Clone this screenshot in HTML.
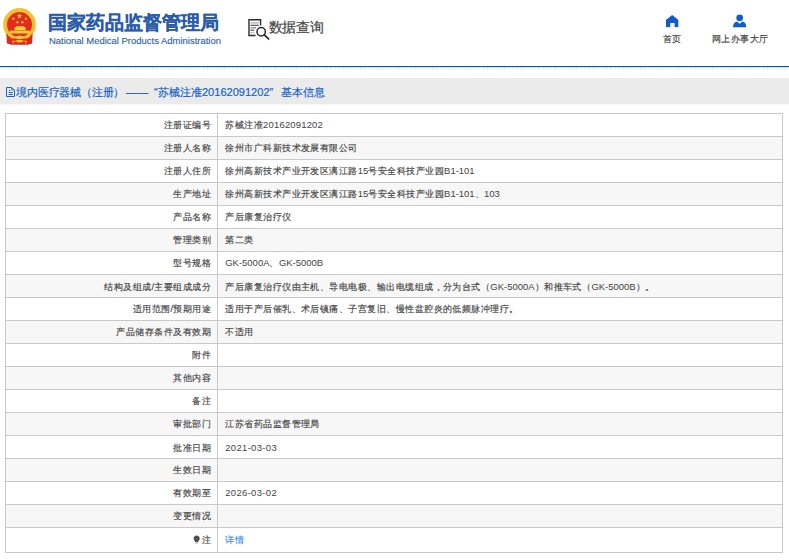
<!DOCTYPE html>
<html><head><meta charset="utf-8">
<style>
*{margin:0;padding:0;box-sizing:border-box}
html,body{width:789px;height:560px;overflow:hidden;background:#fff;font-family:"Liberation Sans",sans-serif;}
#wrap{position:absolute;left:0;top:0;width:1000px;height:710px;transform:scale(0.789);transform-origin:0 0}
.abs{position:absolute}
#title-cn{left:61px;top:13.9px;font-size:24px;line-height:30px;font-weight:bold;color:#2b5cab;-webkit-text-stroke:0.3px #2b5cab;white-space:nowrap}
#title-en{left:62px;top:44.3px;font-size:12px;line-height:16px;color:#2b5cab;-webkit-text-stroke:0.15px #2b5cab;white-space:nowrap}
#sjcx{left:340.5px;top:22.6px;font-size:18px;letter-spacing:-0.6px;line-height:24px;color:#444;-webkit-text-stroke:0.25px #444;white-space:nowrap}
.nav{font-size:12px;line-height:14px;color:#444;-webkit-text-stroke:0.2px #444;white-space:nowrap}
#bline{left:0;top:83.6px;width:1000px;height:1.6px;background:#0a5bc0}
#dots{left:0;top:86px;width:1000px;height:3px;background:repeating-linear-gradient(135deg,#ececec 0 1px,#fff 1px 4px)}
#band{left:0;top:98.5px;width:1000px;height:34.2px;background:#ebebeb}
#crumb{left:20.5px;top:108px;font-size:14px;line-height:18px;color:#1160c8;-webkit-text-stroke:0.2px #1160c8;white-space:nowrap}
#tbl{left:6.8px;top:143.5px;width:984.30px;height:556.20px;border:1.5px solid transparent;overflow:hidden}
.row{position:absolute;left:0;width:100%;border-top:1.5px solid transparent;font-size:12px;color:#444;-webkit-text-stroke:0.2px #444}
.row:first-child{border-top:none}
.lab{position:absolute;left:0;top:0;width:268.70px;height:100%;border-right:1.5px solid transparent;text-align:right;padding-right:8px;line-height:27px;white-space:nowrap}
.val{position:absolute;left:277.70px;top:0;line-height:27px;white-space:nowrap}

.lat{-webkit-text-stroke:0px #444}

</style></head><body>
<div style="position:absolute;left:6px;top:114px;width:776px;height:22px;background:#fff"></div>
<div style="position:absolute;left:6px;top:136px;width:776px;height:1px;background:#c9c9c9"></div>
<div style="position:absolute;left:6px;top:137px;width:776px;height:22px;background:#f7f7f7"></div>
<div style="position:absolute;left:6px;top:159px;width:776px;height:1px;background:#c9c9c9"></div>
<div style="position:absolute;left:6px;top:160px;width:776px;height:22px;background:#fff"></div>
<div style="position:absolute;left:6px;top:182px;width:776px;height:1px;background:#c9c9c9"></div>
<div style="position:absolute;left:6px;top:183px;width:776px;height:22px;background:#f7f7f7"></div>
<div style="position:absolute;left:6px;top:205px;width:776px;height:1px;background:#c9c9c9"></div>
<div style="position:absolute;left:6px;top:206px;width:776px;height:22px;background:#fff"></div>
<div style="position:absolute;left:6px;top:228px;width:776px;height:1px;background:#c9c9c9"></div>
<div style="position:absolute;left:6px;top:229px;width:776px;height:22px;background:#f7f7f7"></div>
<div style="position:absolute;left:6px;top:251px;width:776px;height:1px;background:#c9c9c9"></div>
<div style="position:absolute;left:6px;top:252px;width:776px;height:22px;background:#fff"></div>
<div style="position:absolute;left:6px;top:274px;width:776px;height:1px;background:#c9c9c9"></div>
<div style="position:absolute;left:6px;top:275px;width:776px;height:22px;background:#f7f7f7"></div>
<div style="position:absolute;left:6px;top:297px;width:776px;height:1px;background:#c9c9c9"></div>
<div style="position:absolute;left:6px;top:298px;width:776px;height:22px;background:#fff"></div>
<div style="position:absolute;left:6px;top:320px;width:776px;height:1px;background:#c9c9c9"></div>
<div style="position:absolute;left:6px;top:321px;width:776px;height:22px;background:#f7f7f7"></div>
<div style="position:absolute;left:6px;top:343px;width:776px;height:1px;background:#c9c9c9"></div>
<div style="position:absolute;left:6px;top:344px;width:776px;height:22px;background:#fff"></div>
<div style="position:absolute;left:6px;top:366px;width:776px;height:1px;background:#c9c9c9"></div>
<div style="position:absolute;left:6px;top:367px;width:776px;height:22px;background:#f7f7f7"></div>
<div style="position:absolute;left:6px;top:389px;width:776px;height:1px;background:#c9c9c9"></div>
<div style="position:absolute;left:6px;top:390px;width:776px;height:22px;background:#fff"></div>
<div style="position:absolute;left:6px;top:412px;width:776px;height:1px;background:#c9c9c9"></div>
<div style="position:absolute;left:6px;top:413px;width:776px;height:22px;background:#f7f7f7"></div>
<div style="position:absolute;left:6px;top:435px;width:776px;height:1px;background:#c9c9c9"></div>
<div style="position:absolute;left:6px;top:436px;width:776px;height:22px;background:#fff"></div>
<div style="position:absolute;left:6px;top:458px;width:776px;height:1px;background:#c9c9c9"></div>
<div style="position:absolute;left:6px;top:459px;width:776px;height:22px;background:#f7f7f7"></div>
<div style="position:absolute;left:6px;top:481px;width:776px;height:1px;background:#c9c9c9"></div>
<div style="position:absolute;left:6px;top:482px;width:776px;height:22px;background:#fff"></div>
<div style="position:absolute;left:6px;top:504px;width:776px;height:1px;background:#c9c9c9"></div>
<div style="position:absolute;left:6px;top:505px;width:776px;height:22px;background:#f7f7f7"></div>
<div style="position:absolute;left:6px;top:527px;width:776px;height:1px;background:#c9c9c9"></div>
<div style="position:absolute;left:6px;top:528px;width:776px;height:24px;background:#fff"></div>
<div style="position:absolute;left:5px;top:113px;width:778px;height:440px;border:1px solid #c9c9c9"></div>
<div style="position:absolute;left:217px;top:114px;width:1px;height:438px;background:#c9c9c9"></div>
<div style="position:absolute;left:0;top:66px;width:789px;height:1px;background:#0657c2"></div>
<div style="position:absolute;left:0;top:67px;width:789px;height:1px;background:#d3e2f5"></div>
<div style="position:absolute;left:0;top:68px;width:789px;height:2px;background:repeating-linear-gradient(135deg,#ececec 0 1px,#fff 1px 3px)"></div>
<div style="position:absolute;left:0;top:78px;width:789px;height:26px;background:#ebebeb"></div>
<div style="position:absolute;left:0;top:104px;width:789px;height:1px;background:#f7f7f7"></div>
<div id="wrap">
<svg class="abs" style="left:0;top:0" width="76.05" height="76.05" viewBox="0 0 60 60">
  <path d="M6.6 33 L7.2 43.5 L11 44.6 L28 44.6 L31.8 43.5 L32.4 33 Z" fill="#e3261c"/>
  <circle cx="19.5" cy="24.5" r="16.4" fill="#f3c12f"/>
  <circle cx="19.5" cy="24.6" r="12.5" fill="#e42b1e"/>
  <path d="M7.5 34.5 L6.6 33 L6.8 43 L9 43.8 Q9.5 39 13 38.6 Q16.5 38.4 19.5 39.2 Q22.5 38.4 26 38.6 Q29.5 39 30 43.8 L32.2 43 L32.4 33 L31.5 34.5 Q27 41 19.5 41.2 Q12 41 7.5 34.5 Z" fill="#e3261c"/>
  <path d="M9 34 Q19.5 40.5 30 34 L30.5 35.3 Q19.5 42 8.5 35.3 Z" fill="#f3c12f"/>
  <ellipse cx="19.5" cy="37" rx="3.3" ry="1.6" fill="#f6cf3c"/>
  <path d="M9 43.8 Q9.5 39.5 13 39 L19.5 39.6 L26 39 Q29.5 39.5 30 43.8 L28 44.6 L11 44.6 Z" fill="#e3261c"/>
  <ellipse cx="19.5" cy="41.2" rx="3.2" ry="1.4" fill="#f3c12f"/>
  <path d="M12.5 41.2 H26.5" stroke="#f3c12f" stroke-width="0.9"/>
  <path d="M12.7 40.8 L13.3 43.6 M26.3 40.8 L25.7 43.6" stroke="#f3c12f" stroke-width="0.9"/>
  <rect x="14.5" y="27" width="11.1" height="3.3" fill="#f6cf3c"/>
  <rect x="16" y="26.3" width="8" height="1" fill="#f6cf3c"/>
  <rect x="9.9" y="30.6" width="19.6" height="2.9" fill="#f6cf3c"/>
  <polygon points="19.5,13.1 20.2,15.1 22.3,15.1 20.6,16.4 21.2,18.4 19.5,17.2 17.8,18.4 18.4,16.4 16.7,15.1 18.8,15.1" fill="#f6cf3c"/>
  <circle cx="13.4" cy="18.7" r="1.2" fill="#f3c12f"/>
  <circle cx="25.9" cy="18.7" r="1.2" fill="#f3c12f"/>
  <circle cx="17.4" cy="22.3" r="1.2" fill="#f3c12f"/>
  <circle cx="22.4" cy="22.3" r="1.2" fill="#f3c12f"/>
</svg>

<div id="title-cn" class="abs">国家药品监督管理局</div>
<div id="title-en" class="abs">National Medical Products Administration</div>
<svg class="abs" style="left:310.52px;top:20.28px" width="32.95" height="32.95" viewBox="0 0 26 26">
  <path d="M15.2 9.6 V3.95 H3.6 V19.75 H10.2" fill="none" stroke="#2a2a38" stroke-width="1.4"/>
  <path d="M5.1 7.2 H13.5" stroke="#999" stroke-width="1"/>
  <path d="M5.1 9.5 H13.5" stroke="#333" stroke-width="1"/>
  <path d="M5.1 12.1 H10.7" stroke="#666" stroke-width="1"/>
  <path d="M5.1 14.4 H8.8" stroke="#333" stroke-width="1"/>
  <path d="M5.1 17 H8.8" stroke="#aaa" stroke-width="1"/>
  <circle cx="15.8" cy="16" r="4.2" fill="#fff" stroke="#2a2a38" stroke-width="1.5"/>
  <path d="M19 19.2 L23.2 23.2" stroke="#2a2a38" stroke-width="1.8" stroke-linecap="round"/>
</svg>
<div id="sjcx" class="abs">数据查询</div>
<svg class="abs" style="left:844px;top:18.5px" width="16" height="16" viewBox="0 0 16 16"><path d="M8 0 L16 6.5 L16 15.5 L11 15.5 L11 10 L5.5 10 L5.5 15.5 L0 15.5 L0 6.5 Z" fill="#0f5bd0"/></svg>
<div class="abs nav" style="left:840px;top:42.2px">首页</div>
<svg class="abs" style="left:929px;top:17.5px" width="17" height="17" viewBox="0 0 17 17"><circle cx="8.5" cy="4.6" r="4.3" fill="#0f5bd0"/><path d="M0 17 Q0 10.5 5 9.3 L8.5 12 L12 9.3 Q17 10.5 17 17 Z" fill="#0f5bd0"/></svg>
<div class="abs nav" style="left:902px;top:42.2px">网上办事大厅</div>



<svg class="abs" style="left:4px;top:106px" width="20.28" height="20.28" viewBox="0 0 16 16"><path d="M3.34 3.87 H8.4 L11.34 6.5 V12.87 H3.34 Z" fill="none" stroke="#1463c8" stroke-width="1"/><path d="M8.5 4.1 V6.4 H11.1" fill="none" stroke="#1463c8" stroke-width="0.8"/><path d="M5.8 6.87 H7" stroke="#1463c8" stroke-width="1"/><path d="M5.5 8.87 H9.6" stroke="#1463c8" stroke-width="1"/><path d="M5.5 10.87 H9.6" stroke="#1463c8" stroke-width="1"/></svg>
<div id="crumb" class="abs"><span style="letter-spacing:-0.32px">境内医疗器械（注册）</span><span style="display:inline-block;width:2.5px"></span>——<span style="display:inline-block;width:7.5px"></span>“苏械注准20162091202”<span style="display:inline-block;width:9.5px"></span>基本信息</div>
<div id="tbl" class="abs">
<div class="row" style="top:0.00px;height:29.15px"><div class="lab">注册证编号</div><div class="val">苏械注准<span class="lat" style="letter-spacing:0.22px">20162091202</span></div></div>
<div class="row" style="top:29.15px;height:29.15px"><div class="lab">注册人名称</div><div class="val">徐州市广科新技术发展有限公司</div></div>
<div class="row" style="top:58.30px;height:29.15px"><div class="lab">注册人住所</div><div class="val">徐州高新技术产业开发区漓江路<span class="lat">15</span>号安全科技产业园<span class="lat">B1-101</span></div></div>
<div class="row" style="top:87.45px;height:29.15px"><div class="lab">生产地址</div><div class="val">徐州高新技术产业开发区漓江路<span class="lat">15</span>号安全科技产业园<span class="lat">B1-101</span>、<span class="lat">103</span></div></div>
<div class="row" style="top:116.60px;height:29.15px"><div class="lab">产品名称</div><div class="val">产后康复治疗仪</div></div>
<div class="row" style="top:145.75px;height:29.15px"><div class="lab">管理类别</div><div class="val">第二类</div></div>
<div class="row" style="top:174.90px;height:29.15px"><div class="lab">型号规格</div><div class="val"><span class="lat">GK-5000A</span>、<span class="lat">GK-5000B</span></div></div>
<div class="row" style="top:204.05px;height:29.15px"><div class="lab">结构及组成/主要组成成分</div><div class="val">产后康复治疗仪由主机、导电电极、输出电缆组成，分为台式（<span class="lat">GK-5000A</span>）和推车式（<span class="lat">GK-5000B</span>）。</div></div>
<div class="row" style="top:233.20px;height:29.15px"><div class="lab">适用范围/预期用途</div><div class="val">适用于产后催乳、术后镇痛、子宫复旧、慢性盆腔炎的低频脉冲理疗。</div></div>
<div class="row" style="top:262.35px;height:29.15px"><div class="lab">产品储存条件及有效期</div><div class="val">不适用</div></div>
<div class="row" style="top:291.50px;height:29.15px"><div class="lab">附件</div><div class="val"></div></div>
<div class="row" style="top:320.65px;height:29.15px"><div class="lab">其他内容</div><div class="val"></div></div>
<div class="row" style="top:349.80px;height:29.15px"><div class="lab">备注</div><div class="val"></div></div>
<div class="row" style="top:378.95px;height:29.15px"><div class="lab">审批部门</div><div class="val">江苏省药品监督管理局</div></div>
<div class="row" style="top:408.10px;height:29.15px"><div class="lab">批准日期</div><div class="val"><span class="lat" style="letter-spacing:0.42px">2021-03-03</span></div></div>
<div class="row" style="top:437.25px;height:29.15px"><div class="lab">生效日期</div><div class="val"></div></div>
<div class="row" style="top:466.40px;height:29.15px"><div class="lab">有效期至</div><div class="val"><span class="lat" style="letter-spacing:0.42px">2026-03-02</span></div></div>
<div class="row" style="top:495.55px;height:29.15px"><div class="lab">变更情况</div><div class="val"></div></div>
<div class="row" style="top:525.40px;height:31.50px"><div class="lab"><svg width="8.5" height="12.5" viewBox="0 0 10 14" style="vertical-align:-2.2px;margin-right:1.5px"><path d="M5 0.6 C7.9 0.6 9.6 2.6 9.6 5.1 C9.6 7.4 7.6 8.5 6.9 10.6 L3.1 10.6 C2.4 8.5 0.4 7.4 0.4 5.1 C0.4 2.6 2.1 0.6 5 0.6 Z" fill="#505050"/><rect x="3.2" y="11.3" width="3.6" height="1.6" fill="#b8b8b8"/></svg>注</div><div class="val" style="color:#3c8cf2;-webkit-text-stroke:0.2px #3c8cf2">详情</div></div>
</div>

</div>
</body></html>
